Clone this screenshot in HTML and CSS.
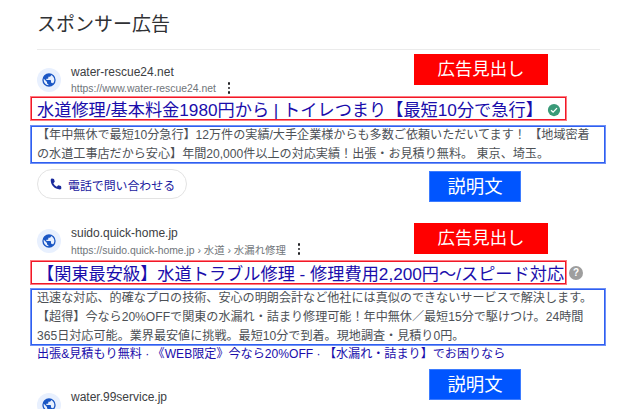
FILE: index.html
```html
<!DOCTYPE html>
<html lang="ja">
<head>
<meta charset="utf-8">
<title>スポンサー広告</title>
<link rel="stylesheet" href="styles.css">
</head>
<body>
<main class="page">
  <h2 class="heading">スポンサー広告</h2>

  <article class="ad ad-first">
    <div class="source">
      <span class="favicon"><svg viewBox="0 0 24 24" width="16" height="16"><path fill="#1a56c4" d="M12 2a10 10 0 1 0 0 20 10 10 0 0 0 0-20zM4 12c0-.6.1-1.2.2-1.8L9 15v1c0 1.1.9 2 2 2v2c-3.9-.5-7-3.9-7-8zm13.9 5.4c-.3-.8-1-1.4-1.9-1.4h-1v-3c0-.6-.4-1-1-1H8v-2h2c.6 0 1-.4 1-1V7h2c1.1 0 2-.9 2-2v-.4c2.9 1.2 5 4.1 5 7.4 0 2.1-.8 4-2.1 5.4z"/></svg></span>
      <div class="source-text">
        <div class="domain">water-rescue24.net</div>
        <div class="url-row"><span class="url">https://www.water-rescue24.net</span><span class="dots"><i></i><i></i><i></i></span></div>
      </div>
    </div>
    <div class="title-row">
      <h3 class="title frame-red">水道修理/基本料金1980円から | トイレつまり【最短10分で急行】<svg class="badge" viewBox="0 0 16 16" width="14" height="14"><circle cx="8" cy="8" r="7" fill="#3a9a78"/><path d="M4.6 8.2l2.4 2.3 4.4-4.6" fill="none" stroke="#fff" stroke-width="1.5"/></svg></h3>
    </div>
    <p class="desc desc-first frame-blue">【年中無休で最短10分急行】12万件の実績/大手企業様からも多数ご依頼いただいてます！ 【地域密着の水道工事店だから安心】年間20,000件以上の対応実績！出張・お見積り無料。 東京、埼玉。</p>
    <div class="call"><svg viewBox="0 0 24 24" width="15" height="15"><path fill="#1a2a9c" d="M6.6 2.5l3 .6 1.2 4.6-2.3 2.1c1.1 2.4 3.1 4.4 5.6 5.7l2.2-2.3 4.5 1.2.6 3.1c0 1.4-1 2.4-2.4 2.3C10.4 19.3 4.7 13.5 4.3 4.9c-.1-1.4.9-2.4 2.3-2.4z"/></svg><span>電話で問い合わせる</span></div>
    <div class="label label-red label-first-red">広告見出し</div>
    <div class="label label-blue label-first-blue">説明文</div>
  </article>

  <article class="ad ad-second">
    <div class="source">
      <span class="favicon"><svg viewBox="0 0 24 24" width="16" height="16"><path fill="#1a56c4" d="M12 2a10 10 0 1 0 0 20 10 10 0 0 0 0-20zM4 12c0-.6.1-1.2.2-1.8L9 15v1c0 1.1.9 2 2 2v2c-3.9-.5-7-3.9-7-8zm13.9 5.4c-.3-.8-1-1.4-1.9-1.4h-1v-3c0-.6-.4-1-1-1H8v-2h2c.6 0 1-.4 1-1V7h2c1.1 0 2-.9 2-2v-.4c2.9 1.2 5 4.1 5 7.4 0 2.1-.8 4-2.1 5.4z"/></svg></span>
      <div class="source-text">
        <div class="domain">suido.quick-home.jp</div>
        <div class="url-row"><span class="url">https://suido.quick-home.jp › 水道 › 水漏れ修理</span><span class="dots"><i></i><i></i><i></i></span></div>
      </div>
    </div>
    <div class="title-row title-row-second">
      <h3 class="title frame-red">【関東最安級】水道トラブル修理 - 修理費用2,200円～/スピード対応</h3><span class="help">?</span>
    </div>
    <p class="desc desc-second frame-blue">迅速な対応、的確なプロの技術、安心の明朗会計など他社には真似のできないサービスで解決します。 【超得】今なら20%OFFで関東の水漏れ・詰まり修理可能！年中無休／最短15分で駆けつけ。24時間365日対応可能。業界最安値に挑戦。最短10分で到着。現地調査・見積り0円。</p>
    <p class="links">出張&amp;見積もり無料 · 《WEB限定》今なら20%OFF · 【水漏れ・詰まり】でお困りなら</p>
    <div class="label label-red label-second-red">広告見出し</div>
    <div class="label label-blue label-second-blue">説明文</div>
  </article>

  <article class="ad ad-third">
    <div class="source">
      <span class="favicon"><svg viewBox="0 0 24 24" width="16" height="16"><path fill="#1a56c4" d="M12 2a10 10 0 1 0 0 20 10 10 0 0 0 0-20zM4 12c0-.6.1-1.2.2-1.8L9 15v1c0 1.1.9 2 2 2v2c-3.9-.5-7-3.9-7-8zm13.9 5.4c-.3-.8-1-1.4-1.9-1.4h-1v-3c0-.6-.4-1-1-1H8v-2h2c.6 0 1-.4 1-1V7h2c1.1 0 2-.9 2-2v-.4c2.9 1.2 5 4.1 5 7.4 0 2.1-.8 4-2.1 5.4z"/></svg></span>
      <div class="source-text">
        <div class="domain">water.99service.jp</div>
        <div class="url-row"><span class="url">https://water.99service.jp › 水道修理 › 水漏れ修理</span></div>
      </div>
    </div>
  </article>
</main>
</body>
</html>
```
FILE: styles.css
```css
html, body { margin: 0; padding: 0; background: #fff; overflow: hidden; height: 409px; }
body { font-family: "Liberation Sans", "Noto Sans CJK JP", sans-serif; color: #474747; }
.page { width: 563px; margin-left: 37px; position: relative; }
.heading { margin: 0; padding: 11px 0; font-size: 19px; line-height: 27px; font-weight: 400; color: #303134; border-bottom: 1px solid #ebebeb; }
.ad { position: relative; }
.ad-first { padding-top: 14px; }
.ad-second { margin-top: 26px; }
.ad-third { margin-top: 26px; }
.source { display: flex; align-items: center; height: 32px; }
.favicon { width: 24px; height: 24px; border-radius: 50%; background: #e8f0fe; display: flex; align-items: center; justify-content: center; flex: none; margin-right: 10px; }
.domain { font-size: 12px; line-height: 16px; color: #3c4043; }
.url-row { display: flex; align-items: center; height: 16px; }
.url { font-size: 10.4px; color: #70757a; white-space: nowrap; }
.dots { display: inline-flex; flex-direction: column; gap: 2px; margin-left: 12px; }
.dots i { width: 2.5px; height: 2.5px; border-radius: 50%; background: #202124; display: block; }
.title-row { display: flex; align-items: center; }
.title-row-second { margin-top: 3px; }
.title { margin: 0; font-size: 17.2px; line-height: 18px; font-weight: 400; color: #1a0dab; white-space: nowrap; }
.frame-red { box-shadow: inset 0 0 0 1px #ff7a80, inset 0 0 0 2px #f01828; margin-left: -7px; padding: 5px 0 2px 7px; width: 537px; height: 25px; box-sizing: border-box; display: flex; align-items: center; flex: none; }
.badge { margin-left: auto; margin-right: 6px; flex: none; }
.help { width: 14px; height: 14px; border-radius: 50%; background: #9e9e9e; color: #fff; font-size: 10px; font-weight: 700; line-height: 14px; text-align: center; margin-left: 2px; flex: none; }
.desc { margin: 4px 0 -1px -7px; width: 576px; box-sizing: border-box; font-size: 12.1px; line-height: 19px; color: #4d5156; }
.desc-second { margin-top: 3px; }
.frame-blue { box-shadow: inset 0 0 0 1px #6f90f7, inset 0 0 0 2px #2f5ff0; padding: 1px 12px 0 7px; }
.links { margin: 1px 0 0; font-size: 12.1px; line-height: 17px; color: #1a0dab; white-space: nowrap; }
.call { display: inline-flex; align-items: center; gap: 5px; margin-top: 6px; height: 30px; padding: 0 0 0 10px; border: 1px solid #e3e3e3; border-radius: 16px; font-size: 11.9px; color: #1a1aa0; box-sizing: border-box; width: 150px; white-space: nowrap; vertical-align: top; }
.label { position: absolute; color: #fff; line-height: 31px; height: 31px; text-align: center; }
.label-red { background: #ff0000; width: 134px; left: 377px; font-size: 17.4px; }
.label-blue { background: #0055ff; width: 92px; left: 392px; font-size: 18.4px; box-shadow: inset 0 0 0 1px #3d7cff; }
.label-first-red { top: 4px; }
.label-first-blue { top: 121px; }
.label-second-red { top: -2px; }
.label-second-blue { top: 144px; }
```
